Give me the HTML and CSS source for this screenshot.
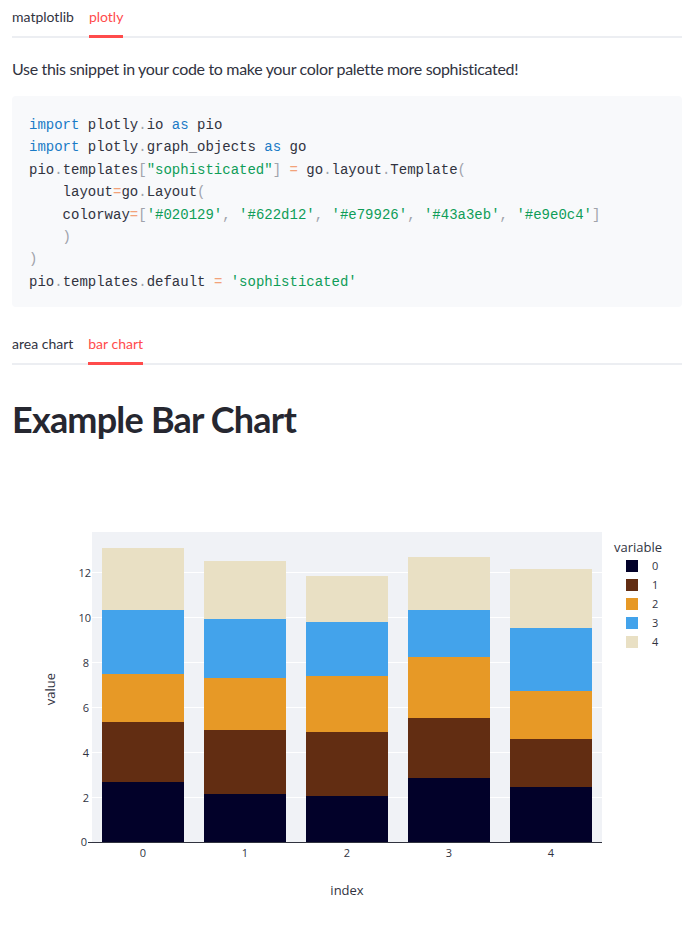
FILE: index.html
```html
<!DOCTYPE html>
<html>
<head>
<meta charset="utf-8">
<link rel="stylesheet" href="styles.css">
</head>
<body>
<div class="main">
  <div class="tabs">
    <div class="tab">matplotlib</div>
    <div class="tab active">plotly</div>
  </div>
  <p class="lead">Use this snippet in your code to make your color palette more sophisticated!</p>
  <pre class="code"><span class="kw">import</span> plotly<span class="pu">.</span>io <span class="kw">as</span> pio
<span class="kw">import</span> plotly<span class="pu">.</span>graph_objects <span class="kw">as</span> go
pio<span class="pu">.</span>templates<span class="pu">[</span><span class="st">"sophisticated"</span><span class="pu">]</span> <span class="op">=</span> go<span class="pu">.</span>layout<span class="pu">.</span>Template<span class="pu">(</span>
    layout<span class="op">=</span>go<span class="pu">.</span>Layout<span class="pu">(</span>
    colorway<span class="op">=</span><span class="pu">[</span><span class="st">'#020129'</span><span class="pu">,</span> <span class="st">'#622d12'</span><span class="pu">,</span> <span class="st">'#e79926'</span><span class="pu">,</span> <span class="st">'#43a3eb'</span><span class="pu">,</span> <span class="st">'#e9e0c4'</span><span class="pu">]</span>
    <span class="pu">)</span>
<span class="pu">)</span>
pio<span class="pu">.</span>templates<span class="pu">.</span>default <span class="op">=</span> <span class="st">'sophisticated'</span></pre>
  <div class="tabs">
    <div class="tab">area chart</div>
    <div class="tab active">bar chart</div>
  </div>
  <h1 class="title">Example Bar Chart</h1>
  <svg class="chart" width="670" height="450" viewBox="12 466 670 450" xmlns="http://www.w3.org/2000/svg">
    <rect x="92" y="532" width="510" height="310" fill="#f0f2f6"/>
    <g stroke="#ffffff" stroke-width="1">
      <line x1="92" x2="602" y1="797.5" y2="797.5"/>
      <line x1="92" x2="602" y1="752.5" y2="752.5"/>
      <line x1="92" x2="602" y1="707.5" y2="707.5"/>
      <line x1="92" x2="602" y1="662.5" y2="662.5"/>
      <line x1="92" x2="602" y1="617.5" y2="617.5"/>
      <line x1="92" x2="602" y1="572.5" y2="572.5"/>
    </g>
    <!-- bar 0 -->
    <rect x="102" y="782" width="82" height="60" fill="#020129"/>
    <rect x="102" y="722" width="82" height="60" fill="#622d12"/>
    <rect x="102" y="674" width="82" height="48" fill="#e79926"/>
    <rect x="102" y="610" width="82" height="64" fill="#43a3eb"/>
    <rect x="102" y="548" width="82" height="62" fill="#e9e0c4"/>
    <!-- bar 1 -->
    <rect x="204" y="794" width="82" height="48" fill="#020129"/>
    <rect x="204" y="730" width="82" height="64" fill="#622d12"/>
    <rect x="204" y="678" width="82" height="52" fill="#e79926"/>
    <rect x="204" y="619" width="82" height="59" fill="#43a3eb"/>
    <rect x="204" y="561" width="82" height="58" fill="#e9e0c4"/>
    <!-- bar 2 -->
    <rect x="306" y="796" width="82" height="46" fill="#020129"/>
    <rect x="306" y="732" width="82" height="64" fill="#622d12"/>
    <rect x="306" y="676" width="82" height="56" fill="#e79926"/>
    <rect x="306" y="622" width="82" height="54" fill="#43a3eb"/>
    <rect x="306" y="576" width="82" height="46" fill="#e9e0c4"/>
    <!-- bar 3 -->
    <rect x="408" y="778" width="82" height="64" fill="#020129"/>
    <rect x="408" y="718" width="82" height="60" fill="#622d12"/>
    <rect x="408" y="657" width="82" height="61" fill="#e79926"/>
    <rect x="408" y="610" width="82" height="47" fill="#43a3eb"/>
    <rect x="408" y="557" width="82" height="53" fill="#e9e0c4"/>
    <!-- bar 4 -->
    <rect x="510" y="787" width="82" height="55" fill="#020129"/>
    <rect x="510" y="739" width="82" height="48" fill="#622d12"/>
    <rect x="510" y="691" width="82" height="48" fill="#e79926"/>
    <rect x="510" y="628" width="82" height="63" fill="#43a3eb"/>
    <rect x="510" y="569" width="82" height="59" fill="#e9e0c4"/>
    <line x1="88" x2="602" y1="842.5" y2="842.5" stroke="#31333f" stroke-width="1"/>
    <g class="tick" text-anchor="end">
      <text x="87" y="846">0</text>
      <text x="89" y="801.5">2</text>
      <text x="89" y="756.5">4</text>
      <text x="89" y="711.5">6</text>
      <text x="89" y="666.5">8</text>
      <text x="91" y="621.5">10</text>
      <text x="91" y="576.5">12</text>
    </g>
    <g class="tick" text-anchor="middle">
      <text x="143" y="857">0</text>
      <text x="245" y="857">1</text>
      <text x="347" y="857">2</text>
      <text x="449" y="857">3</text>
      <text x="551" y="857">4</text>
    </g>
    <text class="axis-title" x="347" y="895" text-anchor="middle">index</text>
    <text class="axis-title" transform="translate(55 689) rotate(-90)" text-anchor="middle">value</text>
    <text class="axis-title" x="614" y="552">variable</text>
    <rect x="626" y="560" width="12" height="12" fill="#020129"/>
    <rect x="626" y="579" width="12" height="12" fill="#622d12"/>
    <rect x="626" y="598" width="12" height="12" fill="#e79926"/>
    <rect x="626" y="617" width="12" height="12" fill="#43a3eb"/>
    <rect x="626" y="636" width="12" height="12" fill="#e9e0c4"/>
    <g class="tick">
      <text x="652" y="570">0</text>
      <text x="652" y="589">1</text>
      <text x="652" y="608">2</text>
      <text x="652" y="627">3</text>
      <text x="652" y="646">4</text>
    </g>
  </svg>
</div>
</body>
</html>
```
FILE: styles.css
```css
html, body {
  margin: 0;
  padding: 0;
  background: #ffffff;
}
body {
  font-family: Lato, "Noto Sans", sans-serif;
  color: #31333f;
}
.main {
  padding: 0 14px 0 12px;
}
.tabs {
  display: flex;
  gap: 15px;
  border-bottom: 2px solid #eceef2;
}
.tab {
  font-size: 14px;
  line-height: 20px;
  padding: 7px 0 8px;
  border-bottom: 3px solid transparent;
  margin-bottom: -2px;
}
.tab.active {
  color: #ff4b4b;
  border-bottom-color: #ff4b4b;
}
.lead {
  font-size: 16px;
  line-height: 24px;
  letter-spacing: -0.33px;
  margin: 19px 0 15px;
}
.code {
  margin: 0 0 20px;
  background: #f8f9fb;
  border-radius: 4px;
  padding: 18px 16px 14px 17px;
  font-family: "Liberation Mono", "DejaVu Sans Mono", monospace;
  font-size: 14px;
  line-height: 22.4px;
  color: #31333f;
  white-space: pre;
}
.kw { color: #1a7bc6; }
.st { color: #0f9d58; }
.op { color: #f2a27a; }
.pu { color: #a0a3ab; }
.title {
  font-size: 36px;
  line-height: 52px;
  font-weight: 700;
  letter-spacing: -0.8px;
  margin: 28px 0 21px;
  color: #262730;
}
.chart {
  display: block;
}
.tick {
  font-family: "Open Sans", "Noto Sans", sans-serif;
  font-size: 11px;
  fill: #31333f;
}
.axis-title {
  font-family: "Open Sans", "Noto Sans", sans-serif;
  font-size: 13px;
  fill: #31333f;
}
```
